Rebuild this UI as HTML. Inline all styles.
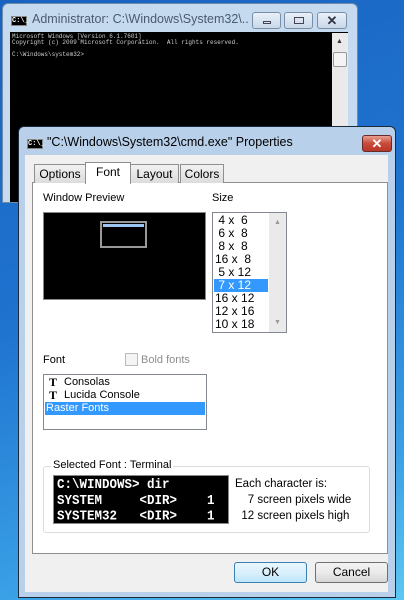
<!DOCTYPE html>
<html><head><style>
*{margin:0;padding:0;box-sizing:border-box}
body{width:404px;height:600px;overflow:hidden;position:relative;font-family:"Liberation Sans",sans-serif;font-size:11px;color:#000;
background:linear-gradient(160deg,#1a62c0 0%,#1f74d0 45%,#3aa0e6 80%,#5cc8f2 100%)}
.abs{position:absolute}
.ico{position:absolute;width:16px;height:10px;background:#000;border:1px solid #888;color:#fff;font-size:7px;line-height:8px;font-family:"Liberation Mono",monospace;font-weight:bold;text-align:center}
.mono{font-family:"Liberation Mono",monospace}
</style></head><body>
<div class="abs" style="left:2px;top:3px;width:356px;height:200px;background:#c5d9ef;border:1px solid #6f8aa8;border-radius:6px 6px 0 0"></div>
<div class="ico" style="left:11px;top:16px">C:\_</div>
<div class="abs" style="left:32px;top:12px;font-size:12.5px;color:#4a5a70;white-space:nowrap;width:216px;overflow:hidden">Administrator: C:\Windows\System32\...</div>
<div class="abs" style="left:252px;top:12px;width:29px;height:17px;border:1px solid #7a8ea6;border-radius:3px;background:linear-gradient(#e8f0f8,#c8d8ea)"><div class="abs" style="left:10px;top:8px;width:8px;height:3px;border:1px solid #445"></div></div>
<div class="abs" style="left:284px;top:12px;width:29px;height:17px;border:1px solid #7a8ea6;border-radius:3px;background:linear-gradient(#e8f0f8,#c8d8ea)"><div class="abs" style="left:9px;top:4px;width:10px;height:7px;border:1px solid #445"></div></div>
<div class="abs" style="left:317px;top:12px;width:30px;height:17px;border:1px solid #7a8ea6;border-radius:3px;background:linear-gradient(#e8f0f8,#c8d8ea);text-align:center;font-size:13px;line-height:15px;color:#334;font-weight:bold">✕</div>
<div class="abs" style="left:10px;top:32px;width:338px;height:170px;background:#000"></div>
<div class="abs mono" style="left:12px;top:34px;color:#ccc;font-size:6px;line-height:6px;white-space:pre">Microsoft Windows [Version 6.1.7601]
Copyright (c) 2009 Microsoft Corporation.  All rights reserved.

C:\Windows\system32&gt;</div>
<div class="abs" style="left:332px;top:33px;width:16px;height:160px;background:#eaeaea"></div>
<div class="abs" style="left:333px;top:52px;width:14px;height:15px;background:#f4f4f4;border:1px solid #999;border-radius:2px"></div>
<div class="abs" style="left:336px;top:38px;font-size:7px;color:#333">▲</div>

<div class="abs" style="left:18px;top:126px;width:378px;height:472px;background:#b8d0ea;border:1px solid #1a2a3a;border-radius:6px 6px 0 0"></div>
<div class="ico" style="left:27px;top:139px">C:\_</div>
<div class="abs" style="left:47px;top:135px;font-size:12.5px;white-space:nowrap">"C:\Windows\System32\cmd.exe" Properties</div>
<div class="abs" style="left:362px;top:135px;width:30px;height:17px;border:1px solid #6a2a2a;border-radius:3px;background:linear-gradient(#e8a090,#c84a3a 50%,#b83828);color:#fff;text-align:center;font-size:13px;font-weight:bold;line-height:15px">✕</div>
<div class="abs" style="left:25px;top:155px;width:363px;height:437px;background:#f0f0f0"></div>
<div class="abs" style="left:32px;top:182px;width:356px;height:372px;background:#fff;border:1px solid #8e8f8f"></div>
<div class="abs" style="left:34px;top:164px;width:52px;height:19px;border:1px solid #8e8f8f;border-bottom:none;background:linear-gradient(#f2f2f2,#dcdcdc);text-align:center;line-height:18px;font-size:12px">Options</div>
<div class="abs" style="left:130px;top:164px;width:49px;height:19px;border:1px solid #8e8f8f;border-bottom:none;background:linear-gradient(#f2f2f2,#dcdcdc);text-align:center;line-height:18px;font-size:12px">Layout</div>
<div class="abs" style="left:180px;top:164px;width:44px;height:19px;border:1px solid #8e8f8f;border-bottom:none;background:linear-gradient(#f2f2f2,#dcdcdc);text-align:center;line-height:18px;font-size:12px">Colors</div>
<div class="abs" style="left:85px;top:162px;width:46px;height:22px;border:1px solid #8e8f8f;border-bottom:none;background:#fff;text-align:center;line-height:18px;font-size:12px">Font</div>

<div class="abs" style="left:43px;top:192px">Window Preview</div>
<div class="abs" style="left:212px;top:192px">Size</div>
<div class="abs" style="left:43px;top:212px;width:163px;height:88px;background:#000;border:1px solid #888"></div>
<div class="abs" style="left:100px;top:221px;width:47px;height:27px;border:2px solid #999;background:#000"><div class="abs" style="left:1px;top:1px;width:41px;height:3px;background:#9cc4ee"></div></div>

<div class="abs" style="left:212px;top:212px;width:75px;height:121px;background:#fff;border:1px solid #828790"></div>
<div class="abs" style="left:269px;top:213px;width:17px;height:119px;background:#eaeaea"></div>
<div class="abs" style="left:214px;top:279px;width:54px;height:13px;background:#3399ff"></div>
<div class="abs" style="left:215px;top:214px;line-height:13px;white-space:pre;font-size:12px"> 4 x  6
 6 x  8
 8 x  8
16 x  8
 5 x 12
<span style="color:#fff"> 7 x 12</span>
16 x 12
12 x 16
10 x 18</div>
<div class="abs" style="left:274px;top:219px;font-size:7px;color:#999">▲</div>
<div class="abs" style="left:274px;top:319px;font-size:7px;color:#999">▼</div>

<div class="abs" style="left:43px;top:354px">Font</div>
<div class="abs" style="left:125px;top:353px;width:13px;height:13px;border:1px solid #bbb;background:#f4f4f4"></div>
<div class="abs" style="left:141px;top:354px;color:#8d8d8d">Bold fonts</div>
<div class="abs" style="left:43px;top:374px;width:164px;height:56px;background:#fff;border:1px solid #828790"></div>
<div class="abs" style="left:45px;top:402px;width:160px;height:13px;background:#3399ff"></div>
<div class="abs" style="left:49px;top:376px;font-family:'Liberation Serif',serif;font-weight:bold;font-size:12px;line-height:13px">T<br>T</div>
<div class="abs" style="left:64px;top:376px;line-height:13px">Consolas<br>Lucida Console</div>
<div class="abs" style="left:46px;top:402px;line-height:13px;color:#fff">Raster Fonts</div>

<div class="abs" style="left:43px;top:466px;width:327px;height:67px;border:1px solid #dcdcdc;border-radius:3px"></div>
<div class="abs" style="left:51px;top:459px;background:#fff;padding:0 2px">Selected Font : Terminal</div>
<div class="abs" style="left:53px;top:475px;width:176px;height:49px;background:#000;border:1px solid #888;overflow:hidden">
<div class="mono" style="color:#fff;font-weight:bold;font-size:12.5px;line-height:14px;white-space:pre;padding-left:3px;margin-top:1px;transform:scaleY(1.12);transform-origin:0 0">C:\WINDOWS&gt; dir
SYSTEM     &lt;DIR&gt;    1
SYSTEM32   &lt;DIR&gt;    1
README  TXT   26926 1</div></div>
<div class="abs" style="left:235px;top:476px;line-height:16px;white-space:pre;font-size:11.5px">Each character is:
    7 screen pixels wide
  12 screen pixels high</div>

<div class="abs" style="left:234px;top:562px;width:73px;height:21px;border:1px solid #3c7fb1;border-radius:3px;background:linear-gradient(#eaf6fd,#d9f0fc 50%,#bee6fd);text-align:center;line-height:19px;font-size:12px">OK</div>
<div class="abs" style="left:315px;top:562px;width:73px;height:21px;border:1px solid #707070;border-radius:3px;background:linear-gradient(#f2f2f2,#ebebeb 50%,#d6d6d6);text-align:center;line-height:19px;font-size:12px">Cancel</div>
</body></html>
